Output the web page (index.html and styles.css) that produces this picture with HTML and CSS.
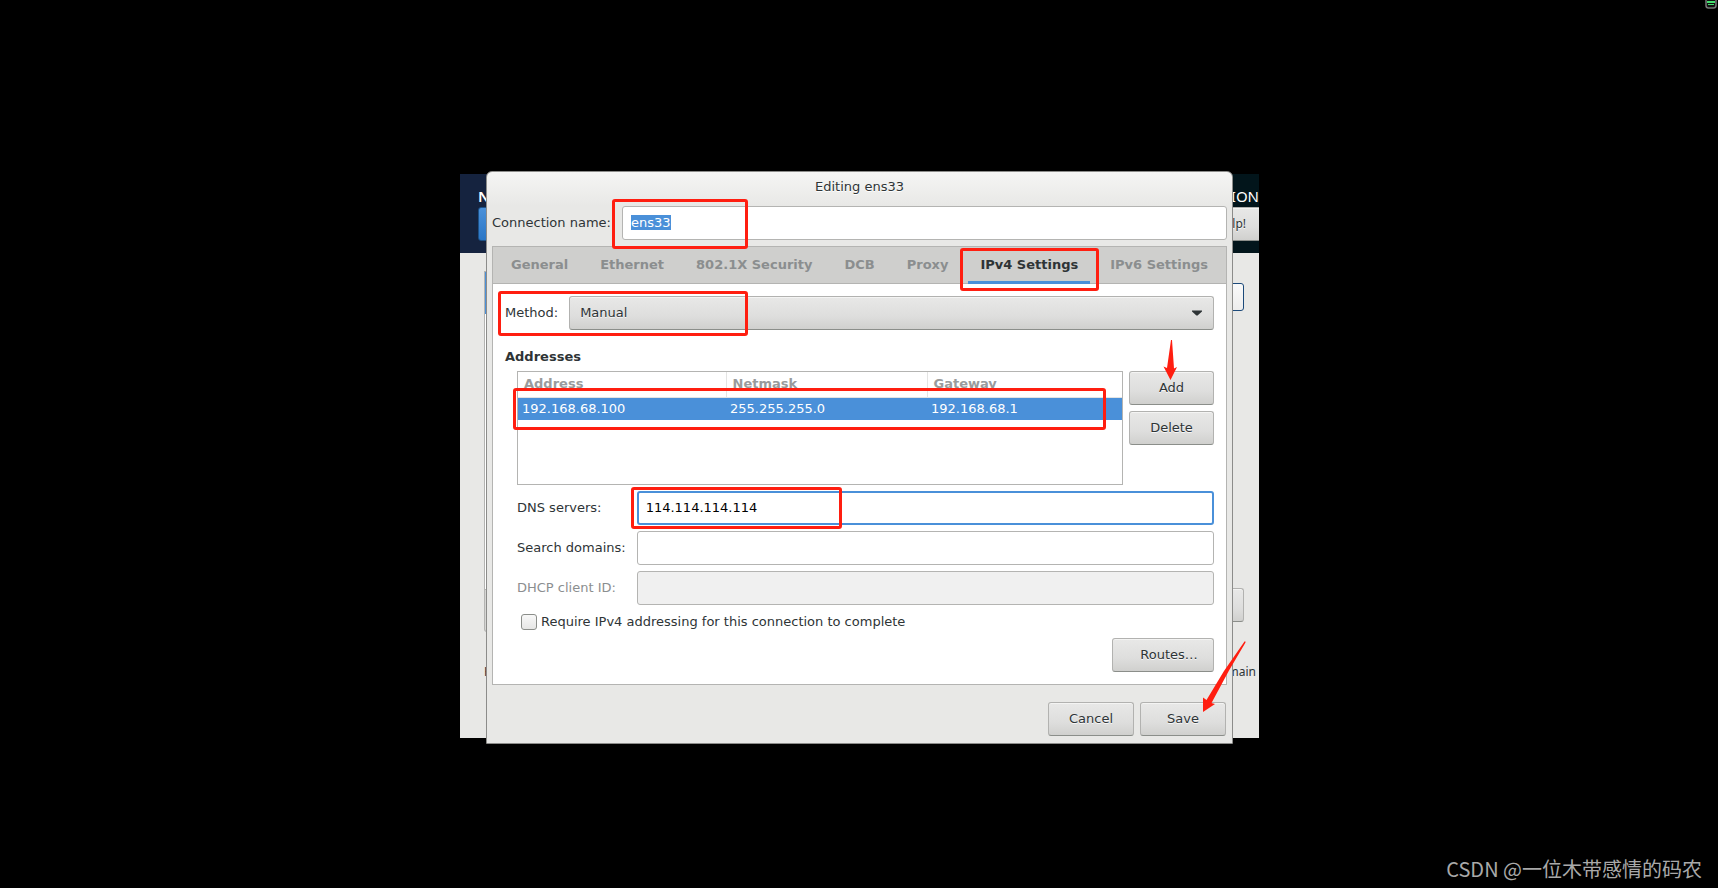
FILE: index.html
```html
<!DOCTYPE html>
<html lang="en">
<head>
    <meta charset="UTF-8">
    <meta name="viewport" content="width=device-width, initial-scale=1.0">
    <title>Editing ens33</title>
    <link rel="stylesheet" href="styles.css">
</head>
<body>
    <main class="stage">
        <!-- installer window behind the dialog -->
        <div class="installer">
            <div class="installer-header">
                <div class="header-left">
                    <span class="header-title">N</span>
                    <button class="done-button" type="button" aria-label="Done"></button>
                </div>
                <div class="header-right">
                    <span class="header-product">TION</span>
                    <button class="button help-button" type="button">Help!</button>
                </div>
            </div>
            <div class="installer-body">
                <div class="device-column">
                    <div class="device-list"><div class="device-selected"></div></div>
                    <div class="device-toolbar"></div>
                    <span class="host-label">H</span>
                </div>
                <div class="detail-column">
                    <button class="switch" type="button" aria-label="Toggle connection"></button>
                    <button class="button configure-button" type="button" aria-label="Configure"></button>
                    <span class="host-current">main</span>
                </div>
            </div>
        </div>

        <form class="dialog">
            <h1 class="dialog-title">Editing ens33</h1>
            <div class="name-row">
                <label for="name">Connection name:</label>
                <input class="entry" id="name" type="text" value="ens33">
            </div>

            <div class="notebook">
                <div class="tabs" role="tablist">
                    <button class="tab" type="button" role="tab">General</button>
                    <button class="tab" type="button" role="tab">Ethernet</button>
                    <button class="tab" type="button" role="tab">802.1X Security</button>
                    <button class="tab" type="button" role="tab">DCB</button>
                    <button class="tab" type="button" role="tab">Proxy</button>
                    <button class="tab active" type="button" role="tab" aria-selected="true">IPv4 Settings</button>
                    <button class="tab" type="button" role="tab">IPv6 Settings</button>
                </div>
                <div class="page">
                    <div class="method-row">
                        <label for="method">Method:</label>
                        <div class="combo">
                            <select class="button" id="method">
                                <option>Manual</option>
                            </select>
                            <svg class="combo-arrow" width="10" height="6" viewBox="0 0 10 6"><path d="M0 0.5h10v1L5.6 5.5h-1.2L0 1.5z" fill="#2e3436"/></svg>
                        </div>
                    </div>

                    <h2 class="section-title">Addresses</h2>
                    <div class="addresses">
                        <div class="table-frame">
                            <table>
                                <thead>
                                    <tr><th class="col-address">Address</th><th class="col-netmask">Netmask</th><th>Gateway</th></tr>
                                </thead>
                                <tbody>
                                    <tr><td>192.168.68.100</td><td>255.255.255.0</td><td>192.168.68.1</td></tr>
                                </tbody>
                            </table>
                        </div>
                        <div class="address-buttons">
                            <button class="button" type="button">Add</button>
                            <button class="button" type="button">Delete</button>
                        </div>
                    </div>

                    <div class="fields">
                        <label for="dns">DNS servers:</label>
                        <input class="entry focused" id="dns" type="text" value="114.114.114.114">
                        <label for="search">Search domains:</label>
                        <input class="entry" id="search" type="text">
                        <label class="dim" for="dhcp">DHCP client ID:</label>
                        <input class="entry" id="dhcp" type="text" disabled>
                    </div>

                    <div class="check-row">
                        <input class="check" id="require" type="checkbox">
                        <label for="require">Require IPv4 addressing for this connection to complete</label>
                    </div>
                    <button class="button routes-button" type="button">Routes…</button>
                </div>
            </div>

            <div class="actions">
                <button class="button" type="button">Cancel</button>
                <button class="button" type="button">Save</button>
            </div>

            <!-- red marks over the dialog -->
            <div class="mark mark-name"></div>
            <div class="mark mark-tab"></div>
            <div class="mark mark-method"></div>
            <div class="mark mark-address"></div>
            <div class="mark mark-dns"></div>
            <svg class="arrow arrow-add" width="14" height="40" viewBox="0 0 14 40"><path d="M8 0h1L11 28.500L14 27L7.500 40L0.500 26.500L4 28z"/></svg>
            <svg class="arrow arrow-save" width="46" height="72" viewBox="0 0 46 72"><path d="M43.500 1.500Q44.500 0.500 44.500 2.500L28 30.500L10.500 63L14 64L2 72V57.500L5.500 60L23 31z"/></svg>
        </form>
    </main>

    <svg class="tray" width="12" height="9" viewBox="0 0 12 9"><path d="M1 0v5.500Q1 8 3.500 8h5Q11 8 11 5.500V0" fill="#111" stroke="#777" stroke-width="1.500"/><path d="M2 1h8v2H2zM3 4h6v1H3z" fill="#45e070"/></svg>
    <div class="watermark">CSDN @一位木带感情的码农</div>

    <script>
        document.getElementById("name").select();
    </script>
</body>
</html>
```
FILE: styles.css
```css
* {
    box-sizing: border-box;
}
body {
    margin: 0;
    min-height: 100vh;
    padding-top: 171px;
    background: #000;
    color: #2e3436;
    font-family: "DejaVu Sans", sans-serif;
    font-size: 13px;
    line-height: 16px;
}
button, input, select {
    font: inherit;
    color: inherit;
}

/* the two windows share one grid cell */
.stage {
    display: grid;
    grid-template-columns: minmax(0, 1fr);
    max-width: 800px;
    margin: 0 auto;
}
.installer, .dialog {
    grid-area: 1 / 1;
}

.installer {
    display: flex;
    flex-direction: column;
    margin: 3px 0 6px 1px;
    overflow: hidden;
    background: #e8e8e6;
    font-family: "Noto Sans", sans-serif;
    font-size: 12px;
}
.installer-header {
    display: flex;
    justify-content: space-between;
    height: 79px;
    background: linear-gradient(90deg, #15233f 50%, #02151b 50%);
    color: #fff;
}
.header-left, .header-right {
    display: flex;
    flex-direction: column;
    gap: 1px;
    padding-top: 12px;
}
.header-left {
    padding-left: 18px;
}
.header-right {
    align-items: flex-end;
}
.header-title, .header-product {
    font-size: 15px;
    line-height: 20px;
}
.header-title {
    font-weight: 600;
}
.done-button {
    width: 90px;
    height: 34px;
    border: 1px solid #1c5187;
    border-radius: 3px;
    background: linear-gradient(#4a90d9, #2a76c6);
}
.installer-body {
    display: flex;
    flex: 1;
    justify-content: space-between;
    padding: 18px 15px 0 24px;
}
.device-column, .detail-column {
    display: flex;
    flex-direction: column;
    width: 300px;
}
.detail-column {
    align-items: flex-end;
    padding-top: 12px;
}
.device-list {
    height: 319px;
    border: 1px solid #b4b4b2;
    background: #fff;
}
.device-selected {
    height: 42px;
    background: #4a90d9;
}
.device-toolbar {
    height: 42px;
    border: 1px solid #b4b4b2;
    border-top: 0;
    border-radius: 0 0 3px 3px;
    background: #d6d6d4;
}
.host-label {
    margin-top: 32px;
}
.switch {
    width: 90px;
    height: 28px;
    border: 1px solid #1c4a7a;
    border-radius: 3px;
    background: linear-gradient(#fafafa, #ededed);
}
.configure-button {
    width: 110px;
    margin-top: 277px;
}
.host-current {
    margin: 42px -12px 0 0;
}

.button {
    height: 34px;
    padding: 0 8px;
    border: 1px solid #b2b2b0;
    border-bottom-color: #8b8e8a;
    border-radius: 3px;
    background: linear-gradient(#e8e8e7, #dededd 60%, #d0d0ce);
    box-shadow: inset 0 1px #f4f4f3;
    color: #2e3436;
    text-shadow: 0 1px rgba(255, 255, 255, 0.8);
}
.help-button {
    width: 76px;
    padding-right: 13px;
    border-right: 0;
    border-radius: 3px 0 0 3px;
    text-align: right;
}

.dialog {
    position: relative;
    margin: 0 26px 0 27px;
    padding: 0 5px 7px;
    border: 1px solid #8c8c8a;
    border-radius: 6px 6px 0 0;
    background: linear-gradient(#f5f5f4, #e8e8e6 34px);
}
.dialog-title {
    margin: 0 0 4px;
    font-size: 13px;
    font-weight: normal;
    line-height: 30px;
    text-align: center;
    text-shadow: 0 1px #fff;
}
.name-row, .method-row {
    display: flex;
    align-items: center;
    gap: 11px;
}
.entry {
    flex: 1;
    min-width: 0;
    height: 34px;
    padding: 0 8px 2px;
    border: 1px solid #b4b4b2;
    border-radius: 3px;
    outline: 0;
    background: #fff;
}
.entry::selection {
    background: #4a90d9;
    color: #fff;
}
.entry:disabled {
    background: #f0f0f0;
}
.focused {
    padding: 0 7px 2px;
    border: 2px solid #4a90d9;
    color: #000;
}

.notebook {
    margin-top: 6px;
    border: 1px solid #b4b4b2;
    background: #fff;
}
.tabs {
    display: flex;
    gap: 8px;
    height: 37px;
    padding: 0 6px;
    border-bottom: 1px solid #b4b4b2;
    background: #cfcfcd;
}
.tab {
    flex: none;
    height: 37px;
    padding: 1px 12px 0;
    border: 0;
    border-bottom: 3px solid transparent;
    background: none;
    color: #8b8e8f;
    font-weight: bold;
    white-space: nowrap;
}
.tab.active {
    border-color: #4a90d9;
    color: #2e3436;
}
.page {
    display: flex;
    flex-direction: column;
    padding: 12px;
}
.combo {
    position: relative;
    flex: 1;
}
.combo select {
    display: block;
    width: 100%;
    padding: 0 10px;
    appearance: none;
}
.combo-arrow {
    position: absolute;
    top: 14px;
    right: 12px;
    pointer-events: none;
}
.section-title {
    margin: 18px 0 6px;
    font-size: 13px;
    line-height: 17px;
}

.addresses {
    display: flex;
    gap: 6px;
    padding-left: 12px;
}
.table-frame {
    flex: 1;
    height: 114px;
    border: 1px solid #b4b4b2;
}
table {
    width: 100%;
    border-collapse: collapse;
    table-layout: fixed;
}
th, td {
    overflow: hidden;
    padding: 0 6px;
    text-align: left;
}
th {
    height: 25px;
    border-right: 1px solid #e4e4e3;
    border-bottom: 1px solid #e4e4e3;
    color: #999b9c;
}
th:last-child {
    border-right: 0;
}
td {
    height: 23px;
    padding: 0 4px;
    background: #4a90d9;
    color: #fff;
}
.col-address {
    width: 208px;
}
.col-netmask {
    width: 201px;
}
.address-buttons {
    display: flex;
    flex-direction: column;
    gap: 6px;
    width: 85px;
}

.fields {
    display: grid;
    grid-template-columns: auto 1fr;
    align-items: center;
    gap: 6px 11px;
    margin: 6px 0;
    padding-left: 12px;
}
.dim {
    color: #8b8e8f;
}
.check-row {
    display: flex;
    align-items: center;
    gap: 4px;
    height: 21px;
    padding-left: 16px;
}
.check {
    width: 16px;
    height: 16px;
    margin: 0;
    border: 1px solid #8b8e8a;
    border-radius: 3px;
    background: linear-gradient(#f8f8f8, #e6e6e5);
    appearance: none;
}
.routes-button {
    align-self: flex-end;
    width: 102px;
    margin-top: 6px;
    padding-left: 20px;
}
.actions {
    display: flex;
    justify-content: flex-end;
    gap: 6px;
    margin-top: 17px;
    padding-right: 1px;
}
.actions .button {
    width: 86px;
}

.mark {
    position: absolute;
    border: 3px solid #ff1e10;
    border-radius: 3px;
    pointer-events: none;
}
.mark-name {
    left: 125px;
    top: 27px;
    width: 136px;
    height: 50px;
}
.mark-tab {
    left: 473px;
    top: 76px;
    width: 139px;
    height: 43px;
}
.mark-method {
    left: 11px;
    top: 119px;
    width: 250px;
    height: 45px;
}
.mark-address {
    left: 26px;
    top: 216px;
    width: 593px;
    height: 42px;
}
.mark-dns {
    left: 144px;
    top: 315px;
    width: 211px;
    height: 42px;
}
.arrow {
    position: absolute;
    fill: #ff1e10;
    pointer-events: none;
}
.arrow-add {
    top: 168px;
    right: 55px;
}
.arrow-save {
    top: 468px;
    right: -15px;
}

.tray {
    position: absolute;
    top: 0;
    right: 1px;
}
.watermark {
    position: absolute;
    right: 16px;
    bottom: 5px;
    color: #a9a9a9;
    font-family: "Noto Sans CJK SC", sans-serif;
    font-size: 20px;
    line-height: 28px;
}
```
